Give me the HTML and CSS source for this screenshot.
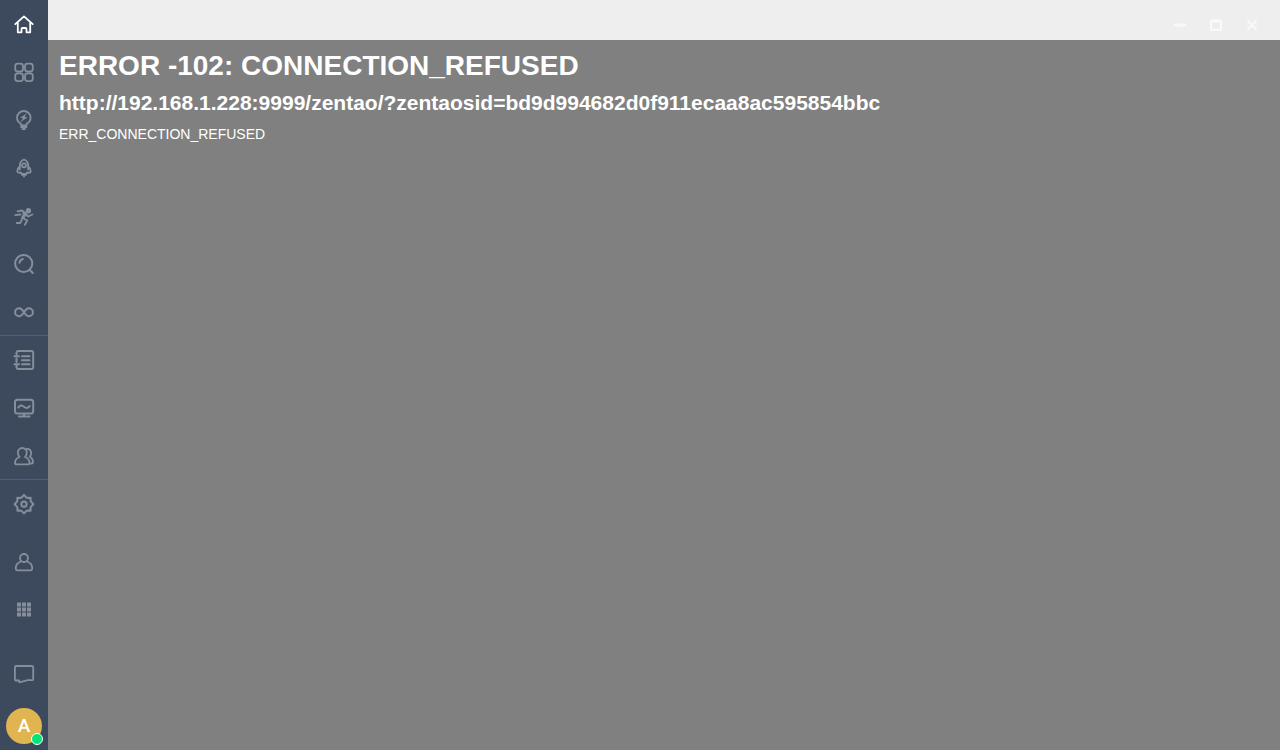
FILE: index.html
```html
<!DOCTYPE html>
<html lang="en">
<head>
    <meta charset="UTF-8">
    <meta name="viewport" content="width=device-width, initial-scale=1.0">
    <title>ZenTao</title>
    <link rel="stylesheet" href="styles.css">
</head>
<body>
    <div class="app">
        <aside class="sidebar">
            <nav class="menu">
                <a class="item active" href="#home" aria-label="Home">
                    <svg class="icon" viewBox="0 0 24 24"><path d="M3.300 12.200L12 4.400l8.700 7.800M5.800 10.500v9.800h3.700v-3.300q0-1 1-1h3q1 0 1 1v3.300h3.700v-9.800"/></svg>
                </a>
                <a class="item" href="#program" aria-label="Program">
                    <svg class="icon" viewBox="0 0 24 24"><rect x="3.200" y="3.700" width="7.800" height="7.800" rx="2.500"/><rect x="13" y="3.700" width="7.800" height="7.800" rx="2.500"/><rect x="3.200" y="13.300" width="7.800" height="7.800" rx="2.500"/><rect x="13" y="13.300" width="7.800" height="7.800" rx="2.500"/></svg>
                </a>
                <a class="item" href="#product" aria-label="Product">
                    <svg class="icon" viewBox="0 0 24 24"><path d="M9 17.300v-1.500C6.500 14.500 5 12.500 5 9.800a6.800 6.800 0 0 1 13.600 0c0 2.700-1.500 4.700-4 6v1.500z"/><path d="M9 19h5.500M10.500 21h2.500"/><path class="fill" d="M15 5L8.200 9.800l2.800.6-2.800 3.800 7.300-4.700-2.900-.7z"/></svg>
                </a>
                <a class="item" href="#project" aria-label="Project">
                    <svg class="icon" viewBox="0 0 24 24"><path d="M7.800 10.500C7.500 6.500 9.300 4.500 12 3.500c2.700 1 4.500 3 4.200 7 1.700 1.200 2.500 3 2.500 4.500 0 1.300-.8 1.800-2 1.800l-1.500-.3-1.200 1.300h-4l-1.200-1.300-1.500.3c-1.200 0-2-.5-2-1.800 0-1.500.8-3.300 2.500-4.500z"/><path d="M7.800 10.500v3M16.200 10.500v3"/><circle cx="12" cy="9.300" r="2"/><path class="fill" d="M9 17.500h6v2h-1.500L12 22l-1.500-2.500H9z"/></svg>
                </a>
                <a class="item" href="#execution" aria-label="Execution">
                    <svg class="icon" viewBox="0 0 24 24"><circle class="fill" cx="16.400" cy="6.700" r="2.700"/><path d="M5.500 7.300l4.500-.8 3.500 2.500M3.300 11.200l5.200-.7M14 10.500l2.200 2 4.200-2M10.700 14l4.600 2.500-2.500 4.300M9.700 16l-1.500 3H4.700"/><path class="fill" d="M10 8.500l1.500-1 4 2-3.500 5-1.700 1.200-1.500-1.200 2.200-4.500z"/></svg>
                </a>
                <a class="item" href="#qa" aria-label="Test">
                    <svg class="icon bold" viewBox="0 0 24 24"><circle cx="11.700" cy="11.500" r="8.600"/><path d="M17.500 17.700l3.300 3.300M7.500 10.700c.4-2 1.600-3.300 3.400-3.700"/></svg>
                </a>
                <a class="item" href="#devops" aria-label="DevOps">
                    <svg class="icon bold" viewBox="0 0 24 24"><path d="M12 12.300c-1.600-2.500-2.900-4-4.900-4a4 4 0 0 0 0 8c2 0 3.300-1.500 4.900-4s2.900-4 4.900-4a4 4 0 0 1 0 8c-2 0-3.300-1.500-4.900-4z"/></svg>
                </a>
            </nav>
            <nav class="menu divided">
                <a class="item" href="#doc" aria-label="Documents">
                    <svg class="icon bold" viewBox="0 0 24 24"><path d="M4.500 6.500V5q0-2 2-2h12.700q2 0 2 2v14q0 2-2 2H6.500q-2 0-2-2v-1.500M4.500 10.500v3.500M2.500 8.300H7M2.500 16.200H7M10 8.300h7.500M10 12.200h7.500M10 16.200h7.500"/></svg>
                </a>
                <a class="item" href="#report" aria-label="Reports">
                    <svg class="icon bold" viewBox="0 0 24 24"><rect x="3" y="3.800" width="18.200" height="13.700" rx="2.500"/><path d="M6.300 11.500c1.500-2.500 3.500-2.500 5.700-.7s4.200 1.300 5.700-.7M12 18v2.300M7 20.500h10.500"/></svg>
                </a>
                <a class="item" href="#system" aria-label="Organization">
                    <svg class="icon" viewBox="0 0 24 24"><path d="M7.500 13C6.200 11.300 5.800 10 5.800 8.500a4.500 4.500 0 0 1 9 0c0 1.500-.4 2.800-1.700 4.500 2.700 1 4.400 2.800 4.400 6q0 1.300-1.300 1.300H4.400Q3 20.300 3 19c0-3.200 1.800-5 4.500-6z"/><path d="M14.500 5c3-.3 4.700 1.500 4.700 4.300 0 1.300-.5 2.400-1.400 3.500 2.300 1.200 3.200 2.900 3.200 5.400q0 1.300-1.300 1.300h-1.200"/></svg>
                </a>
            </nav>
            <nav class="menu divided">
                <a class="item" href="#admin" aria-label="Settings">
                    <svg class="icon bold" viewBox="0 0 24 24"><path d="M12 3L14.300 5.400 15.400 5.900 18.600 5.700 18.600 8.600 19.100 9.700 21.300 12.200 19.100 14.600 18.600 15.700 18.600 18.800 15.400 18.600 14.300 19.100 12 21.400 9.700 19.100 8.600 18.600 5.400 18.800 5.400 15.700 4.900 14.600 2.700 12.200 4.900 9.700 5.400 8.600 5.400 5.700 8.600 5.900 9.700 5.400z"/><circle cx="12" cy="12.200" r="2.600"/></svg>
                </a>
            </nav>
            <nav class="menu tools">
                <a class="item" href="#contacts" aria-label="Contacts">
                    <svg class="icon" viewBox="0 0 24 24"><circle cx="12" cy="8" r="4"/><path d="M9 11.500c-3.300 1-5.200 3-5.200 6.700q0 2.100 1.700 2.100h13q1.700 0 1.700-2.100c0-3.700-1.900-5.700-5.200-6.700"/></svg>
                </a>
                <a class="item" href="#apps" aria-label="Apps">
                    <svg class="icon" viewBox="0 0 24 24"><path class="fill" d="M5 4.500h4v4H5zM10 4.500h4v4h-4zM15 4.500h4v4h-4zM5 9.500h4v4H5zM10 9.500h4v4h-4zM15 9.500h4v4h-4zM5 14.500h4v4H5zM10 14.500h4v4h-4zM15 14.500h4v4h-4z"/></svg>
                </a>
            </nav>
            <div class="account">
                <a class="item" href="#chats" aria-label="Chats">
                    <svg class="icon" viewBox="0 0 24 24"><path d="M4.300 4h15.500q1.400 0 1.400 1.400v11.800q0 1-1 1h-4.400L7.300 20.300 7 18.500H4q-1.100 0-1.100-1.100v-12Q2.900 4 4.300 4z"/></svg>
                </a>
                <button class="avatar" type="button">A<span class="status"></span></button>
            </div>
        </aside>
        <div class="window">
            <header class="titlebar">
                <button class="control" type="button" aria-label="Minimize">
                    <svg viewBox="0 0 16 16"><path d="M3.500 8h9"/></svg>
                </button>
                <button class="control" type="button" aria-label="Maximize">
                    <svg class="thin" viewBox="0 0 16 16"><path d="M3 3.500h10v9.500H3zM3 4.500h10"/></svg>
                </button>
                <button class="control" type="button" aria-label="Close">
                    <svg class="thin" viewBox="0 0 16 16"><path d="M4 4l8 8M12 4l-8 8"/></svg>
                </button>
            </header>
            <main class="error">
                <h1>ERROR -102: CONNECTION_REFUSED</h1>
                <h2>http://192.168.1.228:9999/zentao/?zentaosid=bd9d994682d0f911ecaa8ac595854bbc</h2>
                <p>ERR_CONNECTION_REFUSED</p>
            </main>
        </div>
    </div>
</body>
</html>
```
FILE: styles.css
```css
* {
    box-sizing: border-box;
}
body {
    margin: 0;
    font-family: "Liberation Sans", Arial, sans-serif;
    font-size: 14px;
}
button {
    padding: 0;
    border: none;
    font-family: inherit;
    cursor: pointer;
}
.app {
    display: flex;
    min-height: 100vh;
}

/* left menu */
.sidebar {
    display: flex;
    flex-direction: column;
    width: 48px;
    background: #3d4a5e;
}
.divided {
    box-shadow: 0 -1px #546071;
}
.item {
    display: flex;
    align-items: center;
    justify-content: center;
    height: 48px;
    color: #868e9b;
}
.item.active {
    color: #fff;
}
.icon {
    width: 24px;
    height: 24px;
    fill: none;
    stroke: currentColor;
    stroke-width: 1.8;
    stroke-linecap: round;
    stroke-linejoin: round;
}
.icon.bold {
    stroke-width: 2;
}
.icon .fill {
    fill: currentColor;
    stroke: none;
}
.tools {
    padding-top: 10px;
}
.account {
    display: flex;
    flex-direction: column;
    gap: 10px;
    margin-top: auto;
    padding-bottom: 6px;
}
.avatar {
    position: relative;
    align-self: center;
    width: 36px;
    height: 36px;
    border-radius: 50%;
    background: #e0b450;
    color: #fff;
    font-family: Roboto, sans-serif;
    font-size: 19px;
    font-weight: 500;
    line-height: 36px;
}
.status {
    position: absolute;
    right: -1px;
    bottom: -1px;
    width: 12px;
    height: 12px;
    border: 1px solid #fff;
    border-radius: 50%;
    background: #00e676;
}

/* window content */
.window {
    display: flex;
    flex: 1;
    flex-direction: column;
    min-width: 0;
}
.titlebar {
    display: flex;
    justify-content: flex-end;
    height: 40px;
    padding: 10px 10px 0 0;
    background: #eee;
}
.control {
    display: flex;
    align-items: center;
    justify-content: center;
    width: 36px;
    height: 30px;
    background: none;
    color: #f9f9f9;
}
.control svg {
    width: 16px;
    height: 16px;
    fill: none;
    stroke: currentColor;
    stroke-width: 3;
    stroke-linecap: round;
    stroke-linejoin: round;
}
.control .thin {
    stroke-width: 2;
}
.error {
    flex: 1;
    padding: 10px 11px;
    background: #808080;
    color: #fff;
}
.error h1,
.error h2,
.error p {
    margin: 0;
    overflow-wrap: anywhere;
}
.error h1 {
    margin-bottom: 9px;
    font-size: 28px;
    line-height: 32px;
}
.error h2 {
    margin-bottom: 11px;
    font-size: 21px;
    line-height: 24px;
}
.error p {
    line-height: 16px;
}
```
